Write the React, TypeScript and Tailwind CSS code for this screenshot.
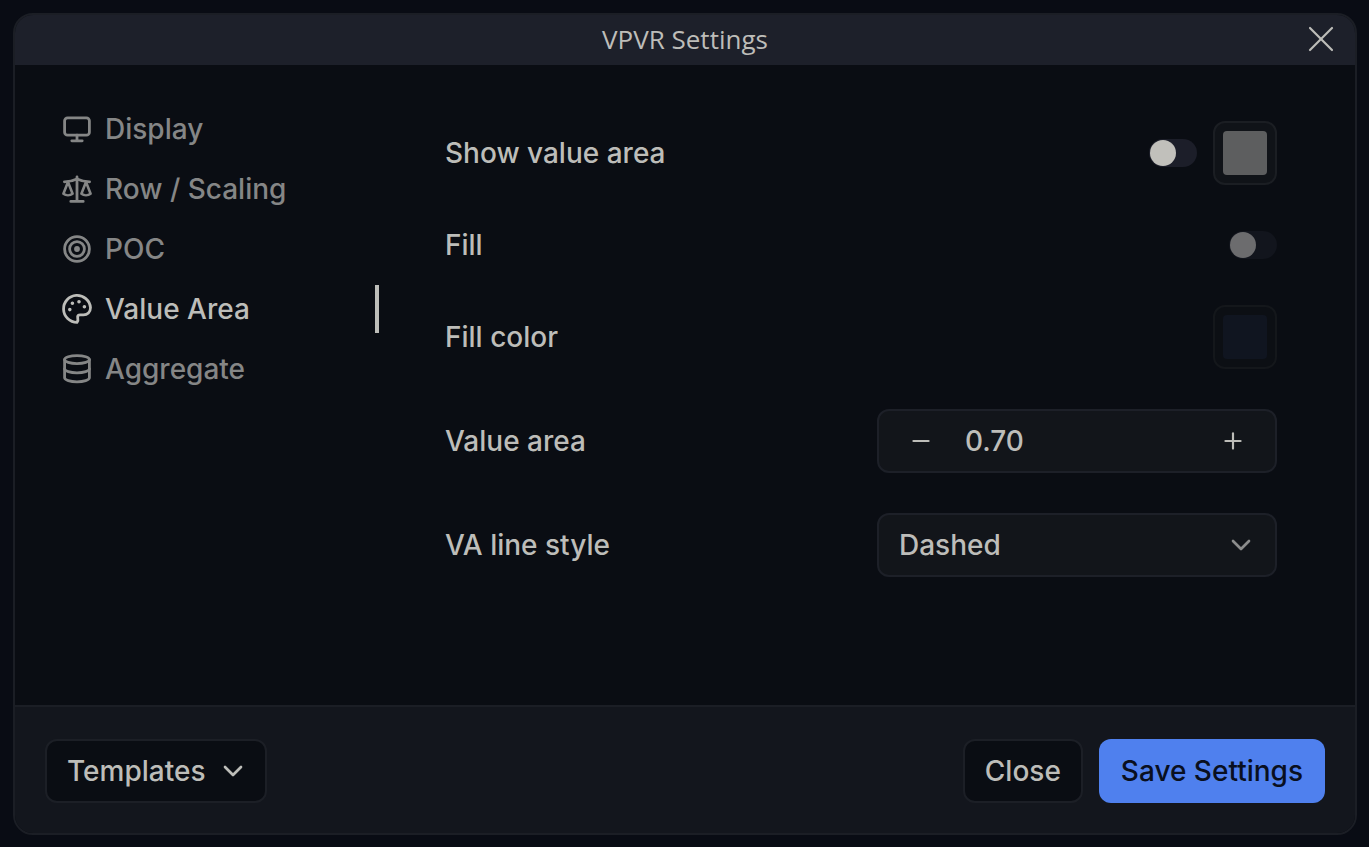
import { useState, type ReactNode } from 'react';
import { ChevronDown, Minus, Plus, X } from 'lucide-react';

function NavIcon({ children }: { children: ReactNode }) {
  return (
    <svg
      viewBox="0 0 32 32"
      className="size-8 shrink-0"
      fill="none"
      stroke="currentColor"
      strokeWidth="2.8"
      strokeLinecap="round"
      strokeLinejoin="round"
      aria-hidden="true"
    >
      {children}
    </svg>
  );
}

const tabs = [
  {
    id: 'display',
    label: 'Display',
    icon: (
      <NavIcon>
        <rect x="3.6" y="4.8" width="24.8" height="17.4" rx="3" />
        <path d="M16 22.2v5.6M10.8 27.8h10.4" />
      </NavIcon>
    ),
  },
  {
    id: 'scaling',
    label: 'Row / Scaling',
    icon: (
      <NavIcon>
        <path d="M16 4v24.4M9.8 28.4h12.4" />
        <path d="M3.4 8.8c5 0 8.8-1 12.6-2.8 3.8 1.8 7.6 2.8 12.6 2.8" />
        <path strokeWidth="2.6" d="M7 9 2.4 20.8c2.6 2 6.6 2 9.2 0zM25 9l-4.6 11.8c2.6 2 6.6 2 9.2 0z" />
      </NavIcon>
    ),
  },
  {
    id: 'poc',
    label: 'POC',
    icon: (
      <NavIcon>
        <circle cx="16" cy="16" r="12.4" />
        <circle cx="16" cy="16" r="7.4" />
        <circle cx="16" cy="16" r="1.5" fill="currentColor" />
      </NavIcon>
    ),
  },
  {
    id: 'value-area',
    label: 'Value Area',
    icon: (
      <NavIcon>
        <path d="M16 29.4A13.5 13.5 0 1 1 29.5 14.6c0 4.6-3.2 7.2-7 7.2h-3.2c-2 0-3 1-2.6 2.8.4 1.7.6 3.2-.7 4.8z" />
        <g fill="currentColor" strokeWidth="1.6">
          <circle cx="8.8" cy="16.6" r="1" />
          <circle cx="11.4" cy="10.2" r="1" />
          <circle cx="18" cy="8.8" r="1" />
          <circle cx="23.4" cy="13.8" r="1" />
        </g>
      </NavIcon>
    ),
  },
  {
    id: 'aggregate',
    label: 'Aggregate',
    icon: (
      <NavIcon>
        <ellipse cx="16" cy="6.6" rx="12.4" ry="4" />
        <path d="M3.6 6.6v18.2c0 2.2 5.6 4 12.4 4s12.4-1.8 12.4-4V6.6" />
        <path d="M3.6 15.8c0 2.2 5.6 4 12.4 4s12.4-1.8 12.4-4" />
      </NavIcon>
    ),
  },
];

function Row({ label, htmlFor, short, children }: { label: string; htmlFor: string; short?: boolean; children: ReactNode }) {
  return (
    <div className={short ? 'flex h-10 items-center justify-between' : 'flex h-16 items-center justify-between'}>
      <label htmlFor={htmlFor}>{label}</label>
      <div className="flex items-center gap-4">{children}</div>
    </div>
  );
}

function Toggle({ id, checked, disabled, onChange }: { id: string; checked: boolean; disabled?: boolean; onChange: (v: boolean) => void }) {
  return (
    <input
      id={id}
      type="checkbox"
      role="switch"
      checked={checked}
      disabled={disabled}
      onChange={(e) => onChange(e.target.checked)}
      className="flex h-7 w-12 appearance-none items-center rounded-full bg-[#1c1e29] px-px before:size-[26px] before:rounded-full before:bg-[#c1c0bb] checked:justify-end checked:bg-[#4f80ee] disabled:bg-[#12151d] disabled:before:bg-[#6c6c6e]"
    />
  );
}

export default function App() {
  const [tab, setTab] = useState('value-area');
  const [showArea, setShowArea] = useState(false);
  const [fill, setFill] = useState(false);
  const [value, setValue] = useState('0.70');
  const [lineStyle, setLineStyle] = useState('Dashed');

  function step(delta: number) {
    const next = Math.min(1, Math.max(0, Number(value) + delta));
    setValue(next.toFixed(2));
  }

  return (
    <div className="flex min-h-screen bg-[#090c14] pt-[13px] pr-3 pb-3 pl-[13px] font-['Inter',sans-serif] text-[28px] leading-9 font-medium text-[#bdbdb9]">
      <div role="dialog" aria-labelledby="title" className="flex flex-1 flex-col overflow-hidden rounded-[20px] border-2 border-[#1b1e25] bg-[#0a0d13]">
        <header className="grid h-[50px] shrink-0 grid-cols-[1fr_auto_1fr] items-center bg-[#1d202a] px-3 pb-[3px]">
          <h1 id="title" className="col-start-2 font-['Open_Sans',sans-serif] text-[26px] font-normal">VPVR Settings</h1>
          <button type="button" aria-label="Close dialog" className="justify-self-end">
            <X size={44} strokeWidth={1.2} />
          </button>
        </header>

        <div className="flex flex-1">
          <nav className="flex w-[364px] shrink-0 flex-col gap-3 pt-10 pb-10 pl-[46px]">
            {tabs.map((t) => (
              <button
                key={t.id}
                type="button"
                onClick={() => setTab(t.id)}
                aria-current={t.id === tab ? 'page' : undefined}
                className={
                  t.id === tab
                    ? 'flex h-12 items-center gap-3 border-r-4 border-[#bdbdb9]'
                    : 'flex h-12 items-center gap-3 border-r-4 border-transparent text-[#858686]'
                }
              >
                {t.icon}
                {t.label}
              </button>
            ))}
          </nav>

          <form className="flex flex-1 flex-col gap-10 pt-14 pr-[78px] pb-10 pl-[66px]">
            <Row label="Show value area" htmlFor="show-area">
              <Toggle id="show-area" checked={showArea} onChange={setShowArea} />
              <button type="button" aria-label="Value area color" className="size-16 rounded-xl border-2 border-[#1b1e23] bg-[#101318] p-2">
                <span className="block size-full rounded bg-[#5d5e5f]" />
              </button>
            </Row>

            <Row label="Fill" htmlFor="fill" short>
              <Toggle id="fill" checked={fill} disabled={!showArea} onChange={setFill} />
            </Row>

            <Row label="Fill color" htmlFor="fill-color">
              <button id="fill-color" type="button" disabled={!fill} className="size-16 rounded-xl border-2 border-[#1b1e23] bg-[#101318] p-2 disabled:border-[#14171b] disabled:bg-[#0c0f14]">
                <span className="block size-full rounded bg-[#101520]" />
              </button>
            </Row>

            <Row label="Value area" htmlFor="value-area">
              <div className="flex h-16 w-[400px] items-center rounded-xl border-2 border-[#1d2028] bg-[#12151a]">
                <button type="button" aria-label="Decrease" onClick={() => step(-0.01)} className="flex w-21 justify-center">
                  <Minus size={26} />
                </button>
                <input
                  id="value-area"
                  value={value}
                  onChange={(e) => setValue(e.target.value)}
                  inputMode="decimal"
                  className="min-w-0 flex-1 bg-transparent pl-0.5 outline-none"
                />
                <button type="button" aria-label="Increase" onClick={() => step(0.01)} className="flex w-21 justify-center">
                  <Plus size={26} />
                </button>
              </div>
            </Row>

            <Row label="VA line style" htmlFor="line-style">
              <div className="relative">
                <select
                  id="line-style"
                  value={lineStyle}
                  onChange={(e) => setLineStyle(e.target.value)}
                  className="h-16 w-[400px] appearance-none rounded-xl border-2 border-[#1d2028] bg-[#12151a] px-5"
                >
                  <option>Dashed</option>
                  <option>Solid</option>
                  <option>Dotted</option>
                </select>
                <ChevronDown size={32} className="pointer-events-none absolute inset-y-0 right-5 my-auto text-[#8b8c8c]" />
              </div>
            </Row>
          </form>
        </div>

        <footer className="flex items-center gap-4 border-t-2 border-[#1b1e25] bg-[#13161d] px-[30px] pt-8 pb-[30px]">
          <button type="button" className="mr-auto flex h-16 items-center gap-3 rounded-xl border-2 border-[#1c1f26] bg-[#0a0d13] pr-4 pl-5">
            Templates
            <ChevronDown size={32} />
          </button>
          <button type="button" className="h-16 rounded-xl border-2 border-[#1c1f26] bg-[#0a0d13] px-5">Close</button>
          <button type="button" className="h-16 rounded-xl bg-[#4f80ee] px-[22px] text-[#090f20]">Save Settings</button>
        </footer>
      </div>
    </div>
  );
}
